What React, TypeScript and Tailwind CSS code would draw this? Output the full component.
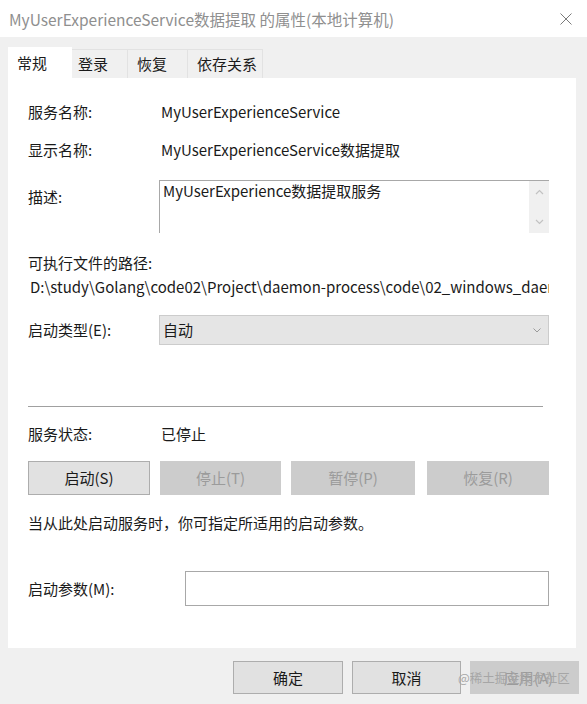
import React from "react";

const font = { fontFamily: '"Noto Sans CJK SC", "Noto Sans", sans-serif' };

function Row({ label, children, className = "" }: { label: string; children?: React.ReactNode; className?: string }) {
  return (
    <div className={"flex h-[20px] items-center " + className}>
      <div className="w-[133px] shrink-0">{label}</div>
      <div className="whitespace-nowrap">{children}</div>
    </div>
  );
}

export default function App() {
  return (
    <div
      className="relative w-[587px] h-[704px] overflow-hidden bg-[#f0f0f0] text-[15px] leading-[20px] text-[#1a1a1a]"
      style={font}
    >
      {/* Title bar */}
      <div className="flex h-[37px] items-center justify-between bg-white pl-[9px] pr-[15px]">
        <div className="text-[15.5px] text-[#8f8f8f] whitespace-nowrap">MyUserExperienceService数据提取 的属性(本地计算机)</div>
        <svg width="12" height="12" viewBox="0 0 12 12" className="shrink-0">
          <path d="M0.5 0.5 L11.5 11.5 M11.5 0.5 L0.5 11.5" stroke="#7a7a7a" strokeWidth="1" fill="none" />
        </svg>
      </div>

      {/* Tabs */}
      <div className="mt-[10px] flex h-[31px] items-end pl-[8px]">
        <div className="flex h-[31px] w-[64px] items-center bg-white pl-[9px] text-[15px]">常规</div>
        <div className="flex h-[29px] w-[56px] items-center border-t border-r border-[#e2e2e2] pl-[6px]">登录</div>
        <div className="flex h-[29px] w-[60px] items-center border-t border-r border-[#e2e2e2] pl-[9px]">恢复</div>
        <div className="flex h-[29px] w-[75px] items-center border-t border-r border-[#e2e2e2] pl-[9px]">依存关系</div>
      </div>

      {/* Panel */}
      <div className="ml-[8px] flex h-[570px] w-[568px] flex-col bg-white pl-[20px] pt-[24px]">
        <Row label="服务名称:">MyUserExperienceService</Row>
        <Row label="显示名称:" className="mt-[18px]">
          MyUserExperienceService数据提取
        </Row>

        <div className="mt-[20px] flex">
          <div className="mt-[7px] w-[131px] shrink-0">描述:</div>
          <div className="relative h-[53px] w-[390px] border-t border-l border-[#a8a8a8] bg-white">
            <div className="pl-[3px]">MyUserExperience数据提取服务</div>
            <div className="absolute right-0 top-0 flex h-[52px] w-[20px] flex-col items-center justify-between bg-[#f0f0f0] py-[8px]">
              <svg width="9" height="6" viewBox="0 0 9 6">
                <path d="M1 5 L4.5 1.5 L8 5" stroke="#c2c2c2" strokeWidth="1.2" fill="none" />
              </svg>
              <svg width="9" height="6" viewBox="0 0 9 6">
                <path d="M1 1 L4.5 4.5 L8 1" stroke="#c2c2c2" strokeWidth="1.2" fill="none" />
              </svg>
            </div>
          </div>
        </div>

        <div className="mt-[20px] h-[20px]">可执行文件的路径:</div>
        <div className="mt-[4px] h-[20px] w-[521px] overflow-hidden whitespace-nowrap pl-[2px]">
          D:\study\Golang\code02\Project\daemon-process\code\02_windows_daemon\MyUserExperienceService.exe
        </div>

        <div className="mt-[18px] flex items-center">
          <div className="w-[131px] shrink-0">启动类型(E):</div>
          <div className="flex h-[30px] w-[390px] items-center justify-between border border-[#cccccc] bg-[#e5e5e5] pl-[3px] pr-[7px]">
            <span>自动</span>
            <svg width="8" height="5" viewBox="0 0 8 5">
              <path d="M0.5 0.5 L4 4 L7.5 0.5" stroke="#9a9a9a" strokeWidth="1" fill="none" />
            </svg>
          </div>
        </div>

        <div className="mt-[61px] h-px w-[515px] shrink-0 bg-[#a0a0a0]" />

        <Row label="服务状态:" className="mt-[17px]">
          已停止
        </Row>

        <div className="mt-[17px] flex">
          <div className="flex h-[34px] w-[122px] items-center justify-center border border-[#adadad] bg-[#e1e1e1]">启动(S)</div>
          <div className="ml-[10px] flex h-[34px] w-[121px] items-center justify-center bg-[#cccccc] text-[#9b9b9b]">停止(T)</div>
          <div className="ml-[10px] flex h-[34px] w-[124px] items-center justify-center bg-[#cccccc] text-[#9b9b9b]">暂停(P)</div>
          <div className="ml-[12px] flex h-[34px] w-[122px] items-center justify-center bg-[#cccccc] text-[#9b9b9b]">恢复(R)</div>
        </div>

        <div className="mt-[18px] h-[20px] whitespace-nowrap">当从此处启动服务时，你可指定所适用的启动参数。</div>

        <div className="mt-[38px] flex items-center">
          <div className="w-[157px] shrink-0">启动参数(M):</div>
          <div className="h-[35px] w-[364px] border border-[#a8a8a8] bg-white" />
        </div>
      </div>

      {/* Bottom buttons */}
      <div className="mt-[13px] flex pl-[233px]">
        <div className="flex h-[33px] w-[110px] items-center justify-center border border-[#adadad] bg-[#e1e1e1]">确定</div>
        <div className="ml-[9px] flex h-[33px] w-[109px] items-center justify-center border border-[#adadad] bg-[#e1e1e1]">取消</div>
        <div className="ml-[9px] flex h-[33px] w-[109px] items-center justify-center bg-[#cccccc] pl-[8px] text-[#9b9b9b]">应用(A)</div>
      </div>

      {/* Watermark */}
      <div className="absolute left-[458px] top-[669px] text-[12.5px] leading-[18px] text-[#a6a6a6] whitespace-nowrap">@稀土掘金技术社区</div>
    </div>
  );
}
